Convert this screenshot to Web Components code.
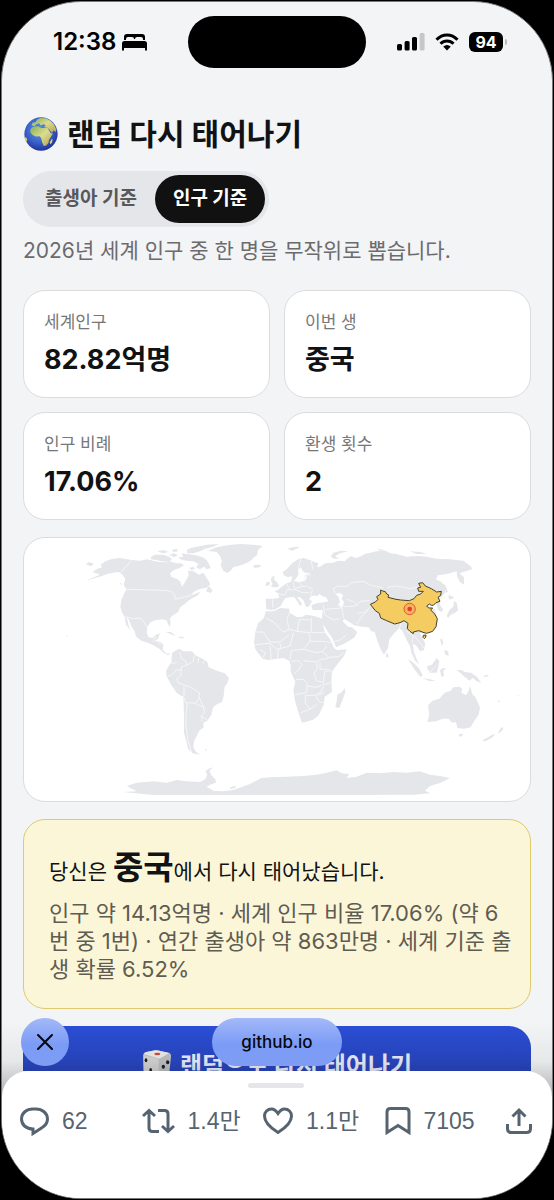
<!DOCTYPE html>
<html lang="ko">
<head>
<meta charset="UTF-8">
<meta name="viewport" content="width=device-width, initial-scale=1">
<title>랜덤 다시 태어나기</title>
<style>
  body {
    margin: 0;
    background: #000;
    font-family: Inter, "Noto Sans CJK KR", sans-serif;
    --ink: #111214;
    --muted: #6b6b6e;
    --line: #dcdcde;
    --page: #f3f4f6;
    --radius: 22px;
  }
</style>
</head>
<body>

<phone-screen>
  <status-bar slot="status" time="12:38" battery="94"></status-bar>

  <rebirth-header>
    <earth-icon slot="icon"></earth-icon>
    랜덤 다시 태어나기
  </rebirth-header>
  <mode-toggle></mode-toggle>
  <page-note>2026년 세계 인구 중 한 명을 무작위로 뽑습니다.</page-note>
  <stat-grid>
    <stat-card label="세계인구">82.82억명</stat-card>
    <stat-card label="이번 생">중국</stat-card>
    <stat-card label="인구 비례">17.06%</stat-card>
    <stat-card label="환생 횟수">2</stat-card>
  </stat-grid>
  <world-map></world-map>
  <result-card country="중국">인구 약 14.13억명 · 세계 인구 비율 17.06% (약 6번 중 1번) · 연간 출생아 약 863만명 · 세계 기준 출생 확률 6.52%</result-card>
  <roll-button>랜덤으로 다시 태어나기</roll-button>

  <link-bar slot="overlay">github.io</link-bar>
  <post-actions slot="sheet"></post-actions>
</phone-screen>

<script>
class PhoneScreen extends HTMLElement {
  constructor() {
    super();
    this.attachShadow({ mode: 'open' });
    this.shadowRoot.innerHTML = `
      <style>
        :host {
          display: flex;
          box-sizing: border-box;
          height: 100vh;
          padding: 1px;
          background: #000;
        }
        .screen {
          position: relative;
          flex: 1;
          min-width: 0;
          display: flex;
          flex-direction: column;
          overflow: hidden;
          border: 1px solid #77777b;
          border-radius: 80px;
          background: var(--page);
        }
        main {
          flex: 1;
          min-height: 0;
          overflow: hidden;
          padding: 44px 21px 0;
        }
        .bottom {
          position: relative;
        }
        /* fade that sits behind the rounded corners of the sheet */
        .bottom::before {
          content: "";
          position: absolute;
          left: 0;
          right: 0;
          top: -50px;
          height: 80px;
          background: linear-gradient(rgba(0,0,0,0), rgba(0,0,0,0.05) 50%, rgba(0,0,0,0.3));
        }
        .overlay {
          position: absolute;
          left: 19px;
          right: 19px;
          top: -53px;
        }
        .sheet {
          position: relative;
        }
      </style>
      <div class="screen">
        <slot name="status"></slot>
        <main><slot></slot></main>
        <div class="bottom">
          <div class="overlay"><slot name="overlay"></slot></div>
          <div class="sheet"><slot name="sheet"></slot></div>
        </div>
      </div>
    `;
  }
}

class StatusBar extends HTMLElement {
  constructor() {
    super();
    this.attachShadow({ mode: 'open' });
    this.shadowRoot.innerHTML = `
      <style>
        :host {
          display: grid;
          grid-template-columns: 1fr 178px 1fr;
          align-items: center;
          padding-top: 14px;
          color: #000;
        }
        .left, .right {
          display: flex;
          align-items: center;
        }
        .left {
          gap: 6px;
          padding-left: 51px;
          font-size: 24px;
          line-height: 28px;
          font-weight: 600;
        }
        .right {
          gap: 10px;
          padding-left: 31px;
        }
        .island {
          height: 52px;
          border-radius: 26px;
          background: #000;
        }
        .battery {
          display: flex;
          align-items: center;
          gap: 2px;
        }
        .battery b {
          width: 34px;
          border-radius: 6px;
          background: #000;
          color: #fff;
          font-size: 16px;
          line-height: 20px;
          font-weight: 700;
          text-align: center;
        }
        .battery i {
          width: 2px;
          height: 6px;
          border-radius: 0 2px 2px 0;
          background: #b9babc;
        }
        svg { display: block; flex: none; }
      </style>
      <div class="left">
        <span id="time"></span>
        <svg width="25" height="18" viewBox="0 0 25 18" aria-hidden="true">
          <path d="M2 7V4Q2 1 5 1H20Q23 1 23 4V7H21V6Q21 4 19 4H15Q13 4 13 6H12Q12 4 10 4H6Q4 4 4 6V7Z"/>
          <path d="M0 17.500V10.500Q0 8 2.500 8H22.500Q25 8 25 10.500V17.500H23V15H2V17.500Z"/>
        </svg>
      </div>
      <div class="island"></div>
      <div class="right">
        <svg width="28" height="18" viewBox="0 0 28 18" aria-hidden="true">
          <rect x="0" y="11" width="5" height="6.500" rx="1.500"/>
          <rect x="7.600" y="8" width="5" height="9.500" rx="1.500"/>
          <rect x="15" y="4" width="5" height="13.500" rx="1.500"/>
          <rect x="22.600" y="0" width="5" height="17.500" rx="1.500" fill="#c6c7c9"/>
        </svg>
        <svg width="24" height="18" viewBox="0 0 24 18" aria-hidden="true">
          <g fill="none" stroke="#000" stroke-width="3">
            <path d="M1.500 6.800Q6 2 12 2T22.500 6.800"/>
            <path d="M5.500 10.800Q8.300 8 12 8T18.500 10.800"/>
          </g>
          <path d="M8.200 13.600Q12 10.600 15.800 13.600L12 17.600Z"/>
        </svg>
        <div class="battery"><b id="battery"></b><i></i></div>
      </div>
    `;
  }

  connectedCallback() {
    this.shadowRoot.querySelector('#time').textContent = this.getAttribute('time');
    this.shadowRoot.querySelector('#battery').textContent = this.getAttribute('battery');
  }
}

class EarthIcon extends HTMLElement {
  constructor() {
    super();
    this.attachShadow({ mode: 'open' });
    this.shadowRoot.innerHTML = `
      <style>
        :host { display: block; }
        svg { display: block; }
      </style>
      <svg width="34" height="34" viewBox="0 0 99 99" aria-hidden="true">
        <defs>
          <radialGradient id="sea" cx="45%" cy="38%" r="62%">
            <stop offset="0" stop-color="#5c9be8"/>
            <stop offset="0.6" stop-color="#3b62c8"/>
            <stop offset="1" stop-color="#20349a"/>
          </radialGradient>
          <linearGradient id="land" x1="0" y1="0" x2="1" y2="1">
            <stop offset="0" stop-color="#83ad58"/>
            <stop offset="0.5" stop-color="#dcdc8d"/>
            <stop offset="1" stop-color="#b59e52"/>
          </linearGradient>
        </defs>
        <circle cx="49.500" cy="49.500" r="48.500" fill="url(#sea)"/>
        <g fill="url(#land)">
          <path d="M24 30L34 26L48 27L55 31L67 30L72 38L78 47L84 48L78 58L73 66L71 76L64 84L57 84L53 74L50 62L46 56L34 57L24 52L18 44L19 36Z"/>
          <path d="M22 25L25 17L34 15L38 7L48 3L63 4L76 10L87 21L94 36L93 44L86 39L81 46L74 37L67 30L59 28L64 23L55 21L49 25L44 18L36 21L31 26Z"/>
          <path d="M79 66L83 63L82 74L77 79L75 74Z"/>
          <path d="M2 58L7 60L10 68L6 72L3 67Z"/>
        </g>
        <path d="M30 27L40 21L47 27L54 26L63 31L50 32L42 27Z" fill="#4c83d2"/>
      </svg>
    `;
  }
}

class RebirthHeader extends HTMLElement {
  constructor() {
    super();
    this.attachShadow({ mode: 'open' });
    this.shadowRoot.innerHTML = `
      <style>
        :host { display: block; }
        h1 {
          display: flex;
          align-items: center;
          gap: 9px;
          margin: 0 0 15px;
          padding-left: 1px;
          color: var(--ink);
          font-size: 30px;
          line-height: 44px;
          font-weight: 700;
          white-space: nowrap;
        }
      </style>
      <h1><slot name="icon"></slot><span><slot></slot></span></h1>
    `;
  }
}

class ModeToggle extends HTMLElement {
  constructor() {
    super();
    this.attachShadow({ mode: 'open' });
    this.shadowRoot.innerHTML = `
      <style>
        :host { display: flex; }
        .group {
          display: flex;
          padding: 4px;
          border-radius: 28px;
          background: #e5e6ea;
        }
        button {
          margin: 0;
          padding: 0 18px;
          border: 0;
          border-radius: 24px;
          background: none;
          color: #58585b;
          font: 700 19px/48px Inter, "Noto Sans CJK KR", sans-serif;
          cursor: pointer;
          white-space: nowrap;
        }
        button[aria-pressed="true"] {
          background: #111;
          color: #fff;
        }
      </style>
      <div class="group">
        <button type="button" aria-pressed="false">출생아 기준</button>
        <button type="button" aria-pressed="true">인구 기준</button>
      </div>
    `;
  }

  connectedCallback() {
    const buttons = this.shadowRoot.querySelectorAll('button');
    buttons.forEach(button => {
      button.addEventListener('click', () => {
        buttons.forEach(b => b.setAttribute('aria-pressed', String(b === button)));
      });
    });
  }
}

class PageNote extends HTMLElement {
  constructor() {
    super();
    this.attachShadow({ mode: 'open' });
    this.shadowRoot.innerHTML = `
      <style>
        :host { display: block; }
        p {
          margin: 8px 0 23px;
          color: var(--muted);
          font-size: 21px;
          line-height: 32px;
        }
      </style>
      <p><slot></slot></p>
    `;
  }
}

class StatGrid extends HTMLElement {
  constructor() {
    super();
    this.attachShadow({ mode: 'open' });
    this.shadowRoot.innerHTML = `
      <style>
        :host {
          display: grid;
          grid-template-columns: 1fr 1fr;
          gap: 14px;
          margin-bottom: 17px;
        }
      </style>
      <slot></slot>
    `;
  }
}

class StatCard extends HTMLElement {
  constructor() {
    super();
    this.attachShadow({ mode: 'open' });
    this.shadowRoot.innerHTML = `
      <style>
        :host {
          display: block;
          padding: 18px 20px 17px;
          border: 1px solid var(--line);
          border-radius: var(--radius);
          background: #fff;
        }
        .label {
          color: #77777a;
          font-size: 17px;
          line-height: 26px;
        }
        .value {
          margin-top: 5px;
          color: var(--ink);
          font-size: 27px;
          line-height: 40px;
          font-weight: 700;
        }
      </style>
      <div class="label"></div>
      <div class="value"><slot></slot></div>
    `;
  }

  connectedCallback() {
    this.shadowRoot.querySelector('.label').textContent = this.getAttribute('label');
  }
}

class WorldMap extends HTMLElement {
  constructor() {
    super();
    this.attachShadow({ mode: 'open' });
    this.shadowRoot.innerHTML = `
      <style>
        :host {
          display: block;
          margin-bottom: 17px;
          border: 1px solid var(--line);
          border-radius: var(--radius);
          background: #fff;
          overflow: hidden;
        }
        svg { display: block; width: 100%; height: auto; }
        .land { fill: #e5e6ea; }
        .lake { fill: #fff; }
        .border { fill: none; stroke: #f5f6f7; stroke-width: 3; stroke-linejoin: round; }
        .picked { fill: #f5cc62; stroke: #45412f; stroke-width: 3; stroke-linejoin: round; }
      </style>
      <svg viewBox="12 6 1518 789" role="img" aria-label="세계 지도">
        <!-- Americas -->
        <g class="land">
          <path d="M218 108L232 98L246 94L242 86L256 76L275 69L300 66L335 72L360 74L380 70L400 74L418 78L440 79L455 77L468 82L484 82L492 88L478 96L462 102L450 112L454 122L472 130L480 136L486 152L494 140L502 126L506 116L504 104L518 104L528 110L536 116L550 110L562 128L571 145L560 155L540 159L524 166L512 178L526 173L541 167L534 178L522 184L508 192L494 204L482 212L474 228L456 240L449 248L452 262L449 273L443 262L440 253L428 250L408 252L392 258L382 272L380 290L386 304L398 306L408 296L420 292L414 308L404 316L422 318L430 326L428 342L440 353L452 350L444 358L430 350L418 338L400 328L384 320L364 314L348 302L344 286L334 270L326 250L320 242L324 260L330 282L318 266L314 242L306 230L301 212L304 192L312 174L319 160L311 146L316 130L308 116L296 108L280 110L262 114L246 120L226 126L198 134L216 126L240 116Z"/>
          <path d="M197 84L208 78L222 84L212 91Z"/>
          <path d="M298 138l8 6l-2 4z"/>
          <path d="M392 64L404 56L430 56L448 62L456 70L448 78L424 76L408 72L394 70Z"/>
          <path d="M412 46L430 42L446 48L428 52ZM448 56L462 52L474 58L462 64ZM456 42L470 38L474 46L460 48Z"/>
          <path d="M502 52L500 42L512 36L532 32L560 26L596 24L580 32L556 38L540 46L520 52ZM484 52L500 54L528 58L548 64L560 72L568 86L572 96L560 100L552 92L540 100L528 94L536 84L520 76L500 74L486 72L474 64L490 62Z"/>
          <path d="M508 96L520 92L526 98L514 102Z"/>
          <path d="M564 44L590 34L620 28L660 24L700 26L728 30L714 42L712 56L700 66L690 76L668 86L640 94L632 104L622 111L610 104L602 88L606 74L600 60L590 48L572 46Z"/>
          <path d="M698 89L708 86L724 88L718 94L704 96Z"/>
          <path d="M558 166L566 150L578 164L572 171Z"/>
          <path d="M436 287L452 288L468 300L456 296ZM476 302L490 302L492 307L478 307Z"/>
          <path d="M456 350L470 342L478 338L490 346L516 346L526 358L550 370L562 378L566 394L590 404L614 412L627 426L622 442L614 452L611 480L606 498L588 506L579 516L574 536L562 554L550 560L551 574L538 584L530 600L522 616L520 634L528 648L540 656L518 652L504 638L498 612L492 590L492 540L490 484L470 470L452 444L440 420L438 406L446 390L454 380Z"/>
          <path d="M554 640l8 0l-4 4z"/>
          <path d="M140 297l5 4l-4 3z"/>
        </g>
        <!-- Antarctica -->
        <path class="land" d="M308 768L350 766L320 750L350 740L400 736L440 740L470 732L500 736L540 738L556 730L562 716L556 706L566 698L580 694L568 704L574 718L586 730L588 740L570 746L560 752L580 764L610 766L640 762L690 744L724 726L750 724L800 722L850 720L890 716L920 710L950 703L965 712L988 714L980 726L1010 722L1040 710L1080 712L1120 708L1160 710L1200 706L1230 716L1260 720L1290 726L1262 740L1230 750L1215 764L1230 772L1180 776L900 777L600 777L400 777Z"/>
        <path class="land" d="M628 756l16 -7l4 6l-16 4z"/>
        <g transform="translate(750 0)">
          <!-- Europe, Asia -->
          <g class="land">
            <path d="M-12 218L-13 188L10 188L28 186L24 172L14 166L26 160L38 150L50 142L62 138L68 124L74 136L86 138L102 136L110 128L108 116L122 112L104 110L98 104L92 94L84 104L86 114L78 128L70 134L64 120L54 124L42 118L38 108L52 98L66 82L84 70L102 66L118 72L134 78L146 82L140 92L150 92L166 82L190 80L206 74L224 76L234 66L244 60L256 66L270 62L284 54L320 46L346 44L362 52L380 54L410 62L440 60L470 62L500 68L540 70L580 74L604 92L606 100L592 104L580 108L568 112L582 124L582 146L570 138L562 124L560 106L544 110L530 114L504 118L498 130L514 138L524 152L526 168L516 182L508 190L510 206L520 222L514 228L504 222L500 206L490 202L482 214L494 220L500 240L502 262L488 284L466 292L450 290L456 306L466 322L462 342L450 346L440 330L428 322L432 348L442 374L448 384L436 376L424 350L420 330L408 308L398 286L388 276L374 290L358 310L354 336L342 356L332 340L322 314L314 288L304 286L296 274L276 272L252 268L238 258L222 248L218 256L234 272L246 274L262 288L254 304L226 322L198 334L188 308L170 282L156 260L156 246L158 222L148 222L128 222L124 208L144 200L158 196L166 186L160 182L148 174L142 182L134 178L122 182L118 190L126 196L116 212L108 212L100 192L88 182L82 184L96 204L90 210L82 196L72 182L60 184L46 186L38 198L32 210L16 220L2 222Z"/>
            <path d="M10 154L2 150L8 144L2 132L6 122L14 120L12 130L22 140L28 150L20 154ZM-14 150L-10 138L0 138L-2 148Z"/>
            <path d="M52 38L68 34L90 32L80 38L66 44ZM182 62L190 50L214 44L234 46L210 52L196 60L206 68L192 68ZM320 38L344 42L332 46ZM420 46L452 48L470 54L440 54Z"/>
            <path d="M516 140L526 148L534 168L528 170ZM536 176L552 184L546 190L536 190ZM530 240L538 222L550 212L552 194L560 200L564 222L556 230L542 236L534 246Z"/>
            <path d="M348 350l8 8l-2 8l-6 -4zM510 310l6 -2l4 14l-4 8zM522 342l12 4l2 14l-10 -4z"/>
            <path d="M414 370L428 378L448 398L458 418L452 424L436 404ZM456 426L480 430L496 434L480 436ZM472 390L486 386L500 366L508 376L504 396L500 410L482 410L472 400ZM510 402L520 396L530 398L520 402L522 420L514 422Z"/>
            <path d="M560 402L574 402L584 408L604 410L622 424L634 440L620 436L608 426L598 434L588 426L572 412Z"/>
            <path d="M640 420l14 -4l2 4l-14 4zM684 492l6 4l-4 4zM744 478l4 0l-2 4z"/>
            <path d="M472 558L478 536L474 508L488 494L508 488L524 470L542 464L550 454L570 452L576 458L574 470L588 478L594 468L600 450L608 476L616 482L630 514L626 536L612 556L602 574L582 578L562 576L558 558L546 560L536 548L518 548L498 556Z"/>
            <path d="M568 594L580 594L574 602L566 600ZM636 614L660 600L676 592L668 604L646 616ZM684 592L690 580L696 572L700 580L690 590Z"/>
          </g>
          <!-- Africa -->
          <path class="land" d="M-13 226L10 226L32 216L58 218L58 230L82 244L98 242L108 236L132 240L156 248L158 262L164 288L180 310L192 336L200 342L230 340L222 360L198 390L186 408L184 436L186 468L164 482L162 504L146 538L128 552L96 560L82 520L74 490L70 462L76 438L62 406L62 388L58 374L40 366L10 370L-6 372L-22 368L-44 340L-48 322L-44 288L-36 262L-18 246Z"/>
          <path class="land" d="M196 514L200 494L202 476L216 468L224 456L226 468L216 496L208 516Z"/>
          <path class="lake" d="M206 182L196 174L208 170L220 178L214 188L222 198L216 216L204 208L210 198ZM130 190L144 178L168 184L176 196L154 200L134 200ZM474 206l14 -2l-4 8l8 4l-10 6z"/>
          <!-- country borders -->
          <g class="border">
            <path d="M190 158L204 150L230 152L244 140L280 136L304 148L340 156M352 154L380 150L420 158L442 154M190 158L196 172M204 208L230 212L256 210L270 196L300 194M230 190L250 196L264 210M160 206L164 236L190 252L208 248M164 220L188 218L216 216L222 248M262 232L284 228L302 212M260 264L276 240L296 222M188 318L210 312L230 296M388 276L394 262M408 284L430 300L426 320M430 296L450 320L462 336M8 188L8 214M24 172L44 178L52 160L70 162L84 154L112 150L128 160L120 182M50 144L62 164M70 138L74 160L96 170L118 170M86 138L98 152M102 136L104 118L124 116M84 104L92 70M124 72L128 100"/>
            <path d="M-12 246L10 258L40 288L58 280L82 286L88 250M-44 288L-20 288L0 318L30 318L58 296M-46 326L0 322L20 340L60 330L70 290M-30 340L-14 350L-20 364M0 330L4 368M26 338L22 368M82 286L120 290L120 316L100 340L64 344L60 370M124 244L124 290L164 290M88 250L120 252M120 316L160 316L184 320M100 340L140 350L158 346L170 330M158 346L176 364L206 362L222 350M64 376L84 374L96 384L84 404L72 414M100 374L140 378L150 372L176 366M140 378L142 396L132 412L140 434L160 440L164 406L176 406M150 380L150 400L172 400L188 408M78 430L100 430L112 444L110 470L74 476M110 450L140 454L162 446L182 440M106 476L106 500L120 520L92 530M110 478L136 478L150 470L162 452M136 478L148 498L162 500M120 520L140 506M144 478L162 470"/>
            <path d="M58 232L50 250L58 280M30 322L34 340M476 412L500 388"/>
          </g>
          <path class="picked" d="M301 205L316 198L324 190L320 182L332 174L332 162L338 165L346 167L350 174L356 177L354 184L378 190L392 192L418 194L432 188L440 178L452 174L460 166L446 166L443 156L452 154L446 142L458 140L466 150L484 158L500 168L514 166L512 178L504 184L510 196L498 200L490 208L484 208L478 204L470 210L476 216L488 216L482 222L494 234L502 248L498 272L488 286L470 292L462 290L446 284L430 288L430 293L420 286L412 278L414 262L402 254L390 260L374 264L350 254L332 246L328 232L316 224Z"/>
          <path class="picked" d="M460 298l8 -1l-1 7l-4 4l-4 -4z"/>
          <circle cx="419" cy="219" r="17" fill="#f6b261" stroke="#df5b2a" stroke-width="3"/>
          <circle cx="419" cy="219" r="7" fill="#de3f27"/>
        </g>
        <g class="border">
          <path d="M300 110L322 88L334 74M318 160L440 163L456 168L464 176L466 190L490 184L512 178M314 242L340 248L362 246L382 272M398 318L408 302M414 324L424 322M480 348L484 368L498 376L500 388L520 376L522 360M536 366L534 382M552 374L548 386M498 388L484 392L484 402L468 402L456 416L444 420M470 380L456 382M484 402L482 420L470 430L474 440L490 446L512 454L538 470L538 486L526 502L508 500L498 502L490 480M502 502L498 540L498 570L504 612L514 648M526 502L550 514L554 528L544 540L546 556M538 486L552 516M546 542L562 552M492 450L492 480"/>
        </g>
      </svg>
    `;
  }
}

class ResultCard extends HTMLElement {
  constructor() {
    super();
    this.attachShadow({ mode: 'open' });
    this.shadowRoot.innerHTML = `
      <style>
        :host {
          display: block;
          margin-bottom: 17px;
          padding: 24px 16px 25px 25px;
          border: 1px solid #e0c96c;
          border-radius: var(--radius);
          background: #fcf6d9;
        }
        p { margin: 0; }
        .lead { color: var(--ink); font-size: 21px; line-height: 46px; }
        .lead strong { font-size: 33px; font-weight: 700; }
        .detail { margin-top: 4px; color: #5f5c52; font-size: 22px; line-height: 28px; }
      </style>
      <p class="lead">당신은 <strong></strong>에서 다시 태어났습니다.</p>
      <p class="detail"><slot></slot></p>
    `;
  }

  connectedCallback() {
    this.shadowRoot.querySelector('strong').textContent = this.getAttribute('country');
  }
}

class RollButton extends HTMLElement {
  constructor() {
    super();
    this.attachShadow({ mode: 'open' });
    this.shadowRoot.innerHTML = `
      <style>
        :host { display: block; }
        button {
          display: flex;
          align-items: center;
          justify-content: center;
          gap: 8px;
          width: 100%;
          margin: 0;
          padding: 20px;
          border: 0;
          border-radius: var(--radius);
          background: linear-gradient(#2a4ed6, #2843b8 50px);
          color: #e9ecf8;
          font: 700 24px/40px Inter, "Noto Sans CJK KR", sans-serif;
          white-space: nowrap;
          cursor: pointer;
        }
      </style>
      <button type="button">
        <svg width="30" height="32" viewBox="0 0 90 96" aria-hidden="true">
          <path d="M4 14Q4 8 12 6L40 1Q46 0 52 2L82 9Q88 11 87 20L82 68Q81 76 74 80L58 90Q50 94 42 90L14 76Q6 72 5 64Z" fill="#bfc0c2"/>
          <path d="M5 12Q8 7 14 6L40 1Q46 0 52 2L82 9L56 24Q50 27 44 24Z" fill="#ecebea"/>
          <path d="M4 14L46 26Q50 28 50 34V92Q46 92 42 90L14 76Q6 72 5 64Z" fill="#d4d4d5"/>
          <ellipse cx="46" cy="12" rx="9" ry="4" fill="#d24a35"/>
          <g fill="#202124">
            <ellipse cx="12" cy="31" rx="4" ry="6"/>
            <ellipse cx="77" cy="37" rx="5" ry="6"/>
            <ellipse cx="64" cy="50" rx="5" ry="6"/>
            <ellipse cx="26" cy="60" rx="4" ry="6"/>
          </g>
        </svg>
        <span><slot></slot></span>
      </button>
    `;
  }
}

class LinkBar extends HTMLElement {
  constructor() {
    super();
    this.attachShadow({ mode: 'open' });
    this.shadowRoot.innerHTML = `
      <style>
        :host {
          display: grid;
          grid-template-columns: 1fr auto 1fr;
          align-items: center;
        }
        button, a {
          border: 0;
          border-radius: 24px;
          background: linear-gradient(#a3b9f8, #7b9bf6 55%, #7f9df4);
          color: #05070f;
        }
        button {
          display: grid;
          place-items: center;
          width: 48px;
          height: 48px;
          padding: 0;
          cursor: pointer;
        }
        a {
          padding: 0 29px;
          font-size: 17px;
          line-height: 48px;
          font-weight: 500;
          text-decoration: none;
        }
      </style>
      <button type="button" aria-label="닫기">
        <svg width="16" height="16" viewBox="0 0 16 16" fill="none" stroke="currentColor" stroke-width="2" stroke-linecap="round" aria-hidden="true">
          <path d="M1 1L15 15M15 1L1 15"/>
        </svg>
      </button>
      <a href="#"><slot></slot></a>
    `;
  }
}

class PostActions extends HTMLElement {
  constructor() {
    super();
    this.attachShadow({ mode: 'open' });
    this.shadowRoot.innerHTML = `
      <style>
        :host {
          display: block;
          padding: 12px 20px 61px 18px;
          border-radius: 26px 26px 0 0;
          background: #fff;
        }
        .grabber {
          width: 56px;
          height: 5px;
          margin: 0 auto 17px;
          border-radius: 3px;
          background: #e5e6ea;
        }
        nav {
          display: grid;
          grid-template-columns: repeat(4, 1fr) auto;
        }
        button {
          display: flex;
          align-items: center;
          gap: 13px;
          margin: 0;
          padding: 0;
          border: 0;
          background: none;
          color: #566370;
          font: 400 23px/32px "Liberation Sans", "Noto Sans CJK KR", sans-serif;
          white-space: nowrap;
          cursor: pointer;
        }
        svg {
          flex: none;
          fill: none;
          stroke: currentColor;
          stroke-width: 3;
        }
      </style>
      <div class="grabber"></div>
      <nav>
        <button type="button" aria-label="답글 62">
          <svg width="29" height="30" viewBox="0 0 29 30">
            <path d="M13 3H16C22 3 27.500 7 27.500 13C27.500 17 25 20 21.500 22L13 27.500V23C6.500 23 1.500 19 1.500 13C1.500 7 6.500 3 13 3Z" stroke-linejoin="miter"/>
          </svg>
          62
        </button>
        <button type="button" aria-label="재게시 1.4만">
          <svg width="33" height="26" viewBox="0 0 33 26">
            <path d="M1 8L7 2.500L13 8M7 3V20Q7 23.500 10.500 23.500H17M16 2.500H22.500Q26 2.500 26 6V23M20 18L26 23.500L32 18"/>
          </svg>
          1.4만
        </button>
        <button type="button" aria-label="마음에 들어요 1.1만">
          <svg width="30" height="28" viewBox="0 0 30 28">
            <path d="M15 6.500C13 3.500 11 2 8.500 2C4.500 2 1.500 5 1.500 9C1.500 15.500 7 20.500 15 25.500C23 20.500 28.500 15.500 28.500 9C28.500 5 25.500 2 21.500 2C19 2 17 3.500 15 6.500Z"/>
          </svg>
          1.1만
        </button>
        <button type="button" aria-label="북마크 7105">
          <svg width="26" height="28" viewBox="0 0 26 28">
            <path d="M2 25.500V5Q2 1.500 5.500 1.500H20.500Q24 1.500 24 5V25.500L13 18.500Z"/>
          </svg>
          7105
        </button>
        <button type="button" aria-label="공유">
          <svg width="26" height="28" viewBox="0 0 26 28">
            <path d="M13 19V3M6.500 9.500L13 3L19.500 9.500M1.500 17V21.500Q1.500 25.500 5.500 25.500H20.500Q24.500 25.500 24.500 21.500V17"/>
          </svg>
        </button>
      </nav>
    `;
  }
}

customElements.define('phone-screen', PhoneScreen);
customElements.define('status-bar', StatusBar);
customElements.define('earth-icon', EarthIcon);
customElements.define('rebirth-header', RebirthHeader);
customElements.define('mode-toggle', ModeToggle);
customElements.define('page-note', PageNote);
customElements.define('stat-grid', StatGrid);
customElements.define('stat-card', StatCard);
customElements.define('world-map', WorldMap);
customElements.define('result-card', ResultCard);
customElements.define('roll-button', RollButton);
customElements.define('link-bar', LinkBar);
customElements.define('post-actions', PostActions);
</script>
</body>
</html>
